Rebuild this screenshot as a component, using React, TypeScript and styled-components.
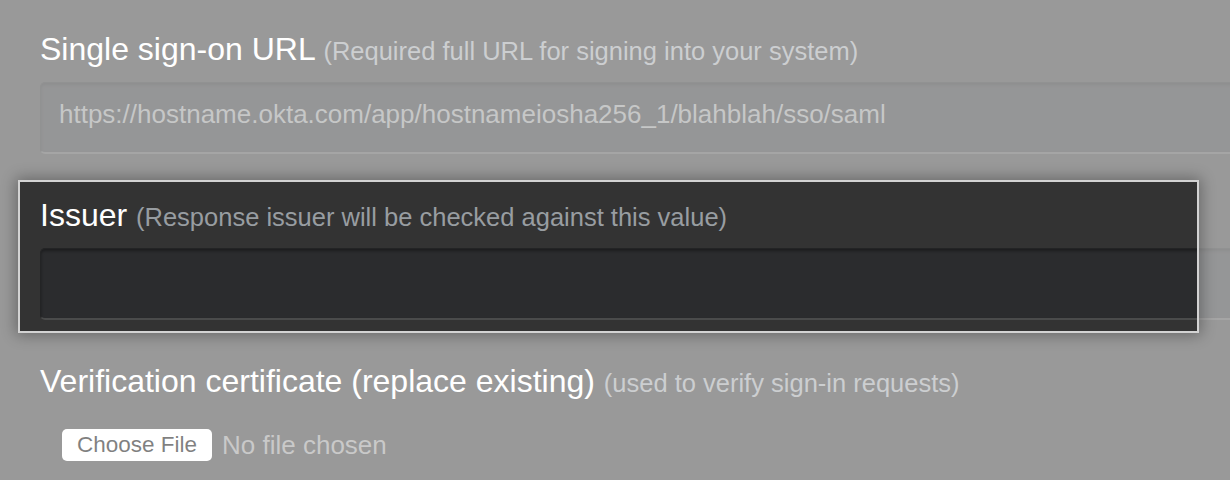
import React from "react";
import styled, { createGlobalStyle } from "styled-components";

const GlobalStyle = createGlobalStyle`
  html, body {
    margin: 0;
    padding: 0;
    background: #333333;
  }
  body {
    font-family: "Liberation Sans", Arial, sans-serif;
    overflow: hidden;
  }
`;

const Page = styled.div`
  position: relative;
  width: 1230px;
  height: 480px;
  overflow: hidden;
  box-sizing: border-box;
  padding: 27px 0 0 40px;
  background: #333333;
  display: flex;
  flex-direction: column;
`;

interface FieldProps {
  $last?: boolean;
}
const Field = styled.div<FieldProps>`
  position: relative;
  display: flex;
  flex-direction: column;
  margin-bottom: ${props => (props.$last ? "0" : "39px")};
`;

const Label = styled.div`
  height: 40px;
  box-sizing: border-box;
  padding-top: 4px;
  font-size: 32px;
  line-height: 36px;
  color: #ffffff;
  white-space: nowrap;
  margin-bottom: 15px;
`;

const Hint = styled.span`
  font-size: 25.5px;
  line-height: 1;
  color: #989da1;
`;

const TextInput = styled.input`
  width: 1240px;
  height: 72px;
  box-sizing: border-box;
  padding: 0 18px 6px;
  background: #2b2c2e;
  border: 1px solid #232425;
  border-bottom: 2px solid #4a4b4b;
  border-radius: 5px;
  box-shadow: inset 0 2px 3px rgba(0, 0, 0, 0.35);
  font-family: "Liberation Sans", Arial, sans-serif;
  font-size: 26px;
  color: #8c8f8e;
  outline: none;
`;

const FileRow = styled.div`
  display: flex;
  align-items: center;
  gap: 10px;
  padding: 15px 0 0 22px;
`;

const FileButton = styled.button`
  width: 150px;
  height: 32px;
  padding: 0;
  border: none;
  border-radius: 5px;
  background: #ffffff;
  font-family: "Liberation Sans", Arial, sans-serif;
  font-size: 22.5px;
  color: #000000;
`;

const FileStatus = styled.span`
  font-size: 26px;
  color: #929292;
`;

// the dimmed page with one field left bright
const Spotlight = styled.div`
  position: absolute;
  top: -13px;
  left: -22px;
  width: 1181px;
  height: 153px;
  box-sizing: border-box;
  border: 2px solid #d3d3d3;
  box-shadow: 0 0 14px 2px rgba(0, 0, 0, 0.33),
    0 0 0 3000px rgba(255, 255, 255, 0.5);
  pointer-events: none;
  z-index: 2;
`;

export default function App() {
  return (
    <>
      <GlobalStyle />
      <Page>
        <Field>
          <Label>
            Single sign-on URL{" "}
            <Hint>(Required full URL for signing into your system)</Hint>
          </Label>
          <TextInput
            readOnly
            value="https://hostname.okta.com/app/hostnameiosha256_1/blahblah/sso/saml"
          />
        </Field>
        <Field>
          <Spotlight />
          <Label>
            Issuer <Hint>(Response issuer will be checked against this value)</Hint>
          </Label>
          <TextInput readOnly value="" />
        </Field>
        <Field $last>
          <Label>
            Verification certificate (replace existing){" "}
            <Hint>(used to verify sign-in requests)</Hint>
          </Label>
          <FileRow>
            <FileButton>Choose File</FileButton>
            <FileStatus>No file chosen</FileStatus>
          </FileRow>
        </Field>
      </Page>
    </>
  );
}
